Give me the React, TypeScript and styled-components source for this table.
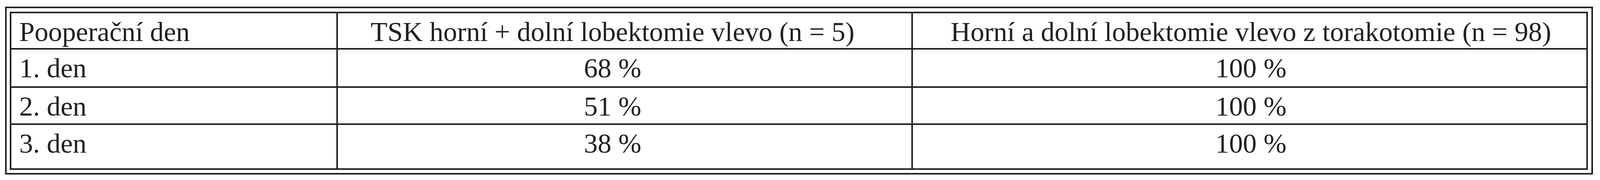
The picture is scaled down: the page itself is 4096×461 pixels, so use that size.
import styled, { createGlobalStyle } from "styled-components";

const GlobalStyle = createGlobalStyle`
	html, body {
		margin: 0;
		padding: 0;
		background: #ffffff;
	}
	body {
		font-family: "Liberation Serif", "Times New Roman", serif;
		color: #231f20;
	}
`;

type Row = {
	day: string;
	tsk: string;
	open: string;
	height: number;
};

const rows: Row[] = [
	{ day: "1. den", tsk: "68 %", open: "100 %", height: 97.9 },
	{ day: "2. den", tsk: "51 %", open: "100 %", height: 94.5 },
	{ day: "3. den", tsk: "38 %", open: "100 %", height: 115.2 },
];

function App()
{
	return (
	<Page>
		<GlobalStyle/>
		<Frame>
			<Grid>
				<Cell $h={93.9}>Pooperační den</Cell>
				<Cell $h={93.9} $align="center" $shift={62}>TSK horní + dolní lobektomie vlevo (n = 5)</Cell>
				<Cell $h={93.9} $align="center" $shift={-6}>Horní a dolní lobektomie vlevo z torakotomie (n = 98)</Cell>

				{rows.map((r) => (
					<Line key={r.day}>
						<Cell $h={r.height}>{r.day}</Cell>
						<Cell $h={r.height} $align="center" $shift={62}>{r.tsk}</Cell>
						<Cell $h={r.height} $align="center" $shift={-6}>{r.open}</Cell>
					</Line>
				))}
			</Grid>
		</Frame>
	</Page>
	)
}

export default App

const Page = styled.div`
	padding: 17px 0 0 12.7px;
`;

const Frame = styled.div`
	display: inline-block;
	border: 4px solid #231f20;
	padding: 8.6px 8.6px 8px 8.6px;
`;

const Grid = styled.div`
	display: grid;
	grid-template-columns: 835.8px 1472.3px 1728px;
	border-left: 4px solid #231f20;
	border-top: 4px solid #231f20;
`;

const Line = styled.div`
	display: contents;
`;

const Cell = styled.div<{ $h: number; $align?: string; $shift?: number }>`
	box-sizing: border-box;
	height: ${(p) => p.$h}px;
	border-right: 4px solid #231f20;
	border-bottom: 4px solid #231f20;
	padding: 12px 20px 0 20px;
	padding-right: ${(p) => (p.$shift && p.$shift > 0 ? p.$shift : 0)}px;
	padding-left: ${(p) => (p.$align === "center" ? (p.$shift && p.$shift < 0 ? -p.$shift : 0) : 20)}px;
	text-align: ${(p) => p.$align || "left"};
	font-size: 70.5px;
	line-height: 71px;
	white-space: nowrap;
`;
